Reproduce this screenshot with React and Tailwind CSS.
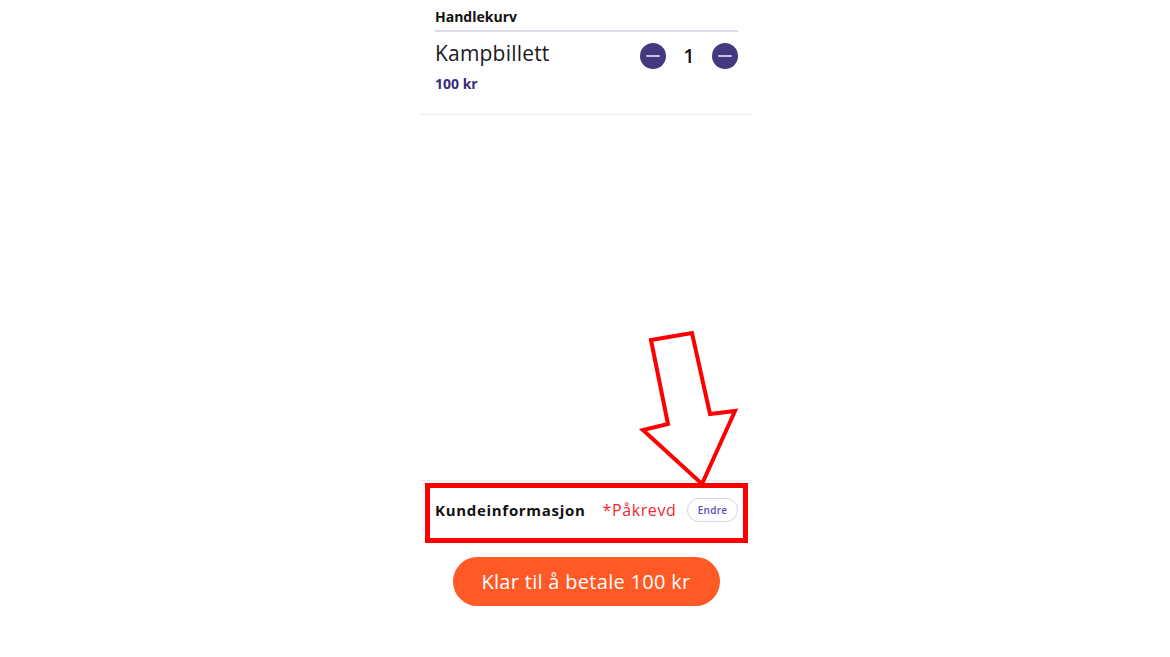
import React, { useState } from "react";

// Small round minus button used in the cart row
const RoundButton = ({ onClick }) => (
  <button
    onClick={onClick}
    className="w-[26px] h-[26px] rounded-full bg-[#45387f] flex items-center justify-center"
  >
    <span className="block w-[14px] h-[2px] rounded bg-[#c9c5dc]" />
  </button>
);

const App = () => {
  const [count, setCount] = useState(1);
  const price = 100;

  return (
    <div
      className="relative w-full h-[657px] bg-white flex justify-center overflow-hidden"
      style={{ fontFamily: "'Open Sans', 'Noto Sans', sans-serif" }}
    >
      <div className="w-[332px] ml-[2px] flex flex-col h-full">
        {/* Cart */}
        <div className="border-b border-[#ececf0]">
          <div className="pl-[15px] pr-[14px] pt-[7px] pb-[21px]">
            <h2 className="text-[14px] font-bold text-[#111] leading-[19px] pb-[4px] border-b-2 border-[#dedbe8]">
              Handlekurv
            </h2>
            <div className="flex items-start justify-between mt-[8px]">
              <div>
                <p className="text-[21px] text-[#1a1a1a] leading-[27px] tracking-[0.2px]">Kampbillett</p>
                <p className="text-[14px] font-bold text-[#3a2b7c] mt-[7px] leading-[19px]">
                  {price * count} kr
                </p>
              </div>
              <div className="flex items-center mt-[2px]">
                <RoundButton onClick={() => setCount(Math.max(0, count - 1))} />
                <span className="w-[46px] text-center text-[19px] font-semibold text-[#111]">{count}</span>
                <RoundButton onClick={() => setCount(Math.max(0, count - 1))} />
              </div>
            </div>
          </div>
        </div>

        <div className="flex-1" />

        {/* Customer info */}
        <div className="border-t border-[#ececf0] pl-[15px] pr-[14px]">
          <div className="flex items-center h-[57px] pt-[1px]">
            <span className="text-[15px] font-bold text-[#111] tracking-[0.7px]">Kundeinformasjon</span>
            <span className="ml-[17px] text-[16px] text-[#f2262e] tracking-[0.6px]">*Påkrevd</span>
            <button className="ml-auto h-[24px] w-[51px] rounded-full border border-[#d6d3e6] text-[10px] font-semibold text-[#5a4bb8] tracking-[0.3px]">
              Endre
            </button>
          </div>
          <div className="flex justify-center mt-[19px] mb-[51px] mr-[1px]">
            <button className="w-[267px] h-[49px] rounded-full bg-[#ff5a26] text-white text-[20px] font-medium tracking-[0.3px]">
              Klar til å betale {price * count} kr
            </button>
          </div>
        </div>
      </div>

      {/* Red annotation: frame and arrow */}
      <svg className="absolute left-0 top-0 pointer-events-none" width="1170" height="657">
        <rect x="427.5" y="485.5" width="318" height="55" fill="none" stroke="#ff0000" strokeWidth="5" />
        <polygon
          points="651,340 692,333 710,414 735,411 702,484 643,430 668,424"
          fill="none"
          stroke="#ff0000"
          strokeWidth="4"
          strokeLinejoin="miter"
        />
      </svg>
    </div>
  );
};

export default App;
